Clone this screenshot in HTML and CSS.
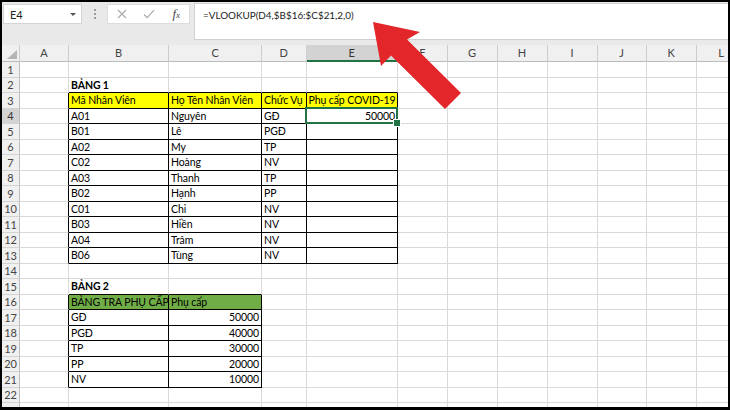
FILE: index.html
```html
<!DOCTYPE html>
<html lang="vi">
<head>
<meta charset="utf-8">
<title>VLOOKUP</title>
<link rel="stylesheet" href="styles.css">
</head>
<body>
<div class="frame">
  <div class="fbar">
    <div class="namebox"><span>E4</span><span class="caret"></span></div>
    <div class="grip"><i></i><i></i><i></i></div>
    <div class="btns">
      <span class="btn"><svg width="10" height="10" viewBox="0 0 10 10"><path d="M1 1L9 9M9 1L1 9" stroke="#a9a9a9" stroke-width="1.1" fill="none"/></svg></span>
      <span class="btn"><svg width="12" height="10" viewBox="0 0 12 10"><path d="M1 5.5L4.2 8.6L11 1.2" stroke="#a9a9a9" stroke-width="1.1" fill="none"/></svg></span>
      <span class="btn fx">f<small>x</small></span>
    </div>
    <div class="formula">=VLOOKUP(D4,$B$16:$C$21,2,0)</div>
  </div>
  <div class="sheet">
    <span class="ch corner"><i></i></span><span class="ch">A</span><span class="ch">B</span><span class="ch">C</span><span class="ch">D</span><span class="ch hl">E</span><span class="ch">F</span><span class="ch">G</span><span class="ch">H</span><span class="ch">I</span><span class="ch">J</span><span class="ch">K</span><span class="ch">L</span>

    <span class="rh">1</span><span></span><span></span><span></span><span></span><span></span><span></span><span></span><span></span><span></span><span></span><span></span><span></span>
    <span class="rh">2</span><span></span><span class="b tb">BẢNG 1</span><span class="tb"></span><span class="tb"></span><span class="tb"></span><span></span><span></span><span></span><span></span><span></span><span></span><span></span>
    <span class="rh">3</span><span class="tr"></span><span class="t y">Mã Nhân Viên</span><span class="t y">Họ Tên Nhân Viên</span><span class="t y">Chức Vụ</span><span class="t y">Phụ cấp COVID-19</span><span></span><span></span><span></span><span></span><span></span><span></span><span></span>
    <span class="rh hl">4</span><span class="tr"></span><span class="t">A01</span><span class="t">Nguyên</span><span class="t">GĐ</span><span class="t n sel">50000</span><span></span><span></span><span></span><span></span><span></span><span></span><span></span>
    <span class="rh">5</span><span class="tr"></span><span class="t">B01</span><span class="t">Lê</span><span class="t">PGĐ</span><span class="t"></span><span></span><span></span><span></span><span></span><span></span><span></span><span></span>
    <span class="rh">6</span><span class="tr"></span><span class="t">A02</span><span class="t">My</span><span class="t">TP</span><span class="t"></span><span></span><span></span><span></span><span></span><span></span><span></span><span></span>
    <span class="rh">7</span><span class="tr"></span><span class="t">C02</span><span class="t">Hoàng</span><span class="t">NV</span><span class="t"></span><span></span><span></span><span></span><span></span><span></span><span></span><span></span>
    <span class="rh">8</span><span class="tr"></span><span class="t">A03</span><span class="t">Thanh</span><span class="t">TP</span><span class="t"></span><span></span><span></span><span></span><span></span><span></span><span></span><span></span>
    <span class="rh">9</span><span class="tr"></span><span class="t">B02</span><span class="t">Hạnh</span><span class="t">PP</span><span class="t"></span><span></span><span></span><span></span><span></span><span></span><span></span><span></span>
    <span class="rh">10</span><span class="tr"></span><span class="t">C01</span><span class="t">Chi</span><span class="t">NV</span><span class="t"></span><span></span><span></span><span></span><span></span><span></span><span></span><span></span>
    <span class="rh">11</span><span class="tr"></span><span class="t">B03</span><span class="t">Hiền</span><span class="t">NV</span><span class="t"></span><span></span><span></span><span></span><span></span><span></span><span></span><span></span>
    <span class="rh">12</span><span class="tr"></span><span class="t">A04</span><span class="t">Trâm</span><span class="t">NV</span><span class="t"></span><span></span><span></span><span></span><span></span><span></span><span></span><span></span>
    <span class="rh">13</span><span class="tr"></span><span class="t">B06</span><span class="t">Tùng</span><span class="t">NV</span><span class="t"></span><span></span><span></span><span></span><span></span><span></span><span></span><span></span>
    <span class="rh">14</span><span></span><span></span><span></span><span></span><span></span><span></span><span></span><span></span><span></span><span></span><span></span><span></span>
    <span class="rh">15</span><span></span><span class="b tb">BẢNG 2</span><span class="tb"></span><span></span><span></span><span></span><span></span><span></span><span></span><span></span><span></span><span></span>
    <span class="rh">16</span><span class="tr"></span><span class="t g">BẢNG TRA PHỤ CẤP</span><span class="t g">Phụ cấp</span><span></span><span></span><span></span><span></span><span></span><span></span><span></span><span></span><span></span>
    <span class="rh">17</span><span class="tr"></span><span class="t">GĐ</span><span class="t n">50000</span><span></span><span></span><span></span><span></span><span></span><span></span><span></span><span></span><span></span>
    <span class="rh">18</span><span class="tr"></span><span class="t">PGĐ</span><span class="t n">40000</span><span></span><span></span><span></span><span></span><span></span><span></span><span></span><span></span><span></span>
    <span class="rh">19</span><span class="tr"></span><span class="t">TP</span><span class="t n">30000</span><span></span><span></span><span></span><span></span><span></span><span></span><span></span><span></span><span></span>
    <span class="rh">20</span><span class="tr"></span><span class="t">PP</span><span class="t n">20000</span><span></span><span></span><span></span><span></span><span></span><span></span><span></span><span></span><span></span>
    <span class="rh">21</span><span class="tr"></span><span class="t">NV</span><span class="t n">10000</span><span></span><span></span><span></span><span></span><span></span><span></span><span></span><span></span><span></span>
    <span class="rh">22</span><span></span><span></span><span></span><span></span><span></span><span></span><span></span><span></span><span></span><span></span><span></span><span></span>
    <span class="rh">23</span><span></span><span></span><span></span><span></span><span></span><span></span><span></span><span></span><span></span><span></span><span></span><span></span>
  </div>
  <svg class="arrow" width="730" height="410" viewBox="0 0 730 410" aria-hidden="true">
    <polygon points="373,22 420,32 407,39.5 461,93 445,109 391,55.5 381,66" fill="#e2262a"/>
  </svg>
</div>
</body>
</html>
```
FILE: styles.css
```css
* { box-sizing: border-box; }
html, body { margin: 0; padding: 0; background: #fff; }
body {
  font-family: "Lato", "Liberation Sans", sans-serif;
  font-size: 10.5px;
  letter-spacing: -0.1px;
  color: #000;
}
.frame {
  position: relative;
  width: 730px;
  height: 410px;
  border: 2px solid #000;
  border-bottom-width: 3px;
  overflow: hidden;
  display: flex;
  flex-direction: column;
  background: #fff;
}
.fbar {
  flex: 0 0 43px;
  display: flex;
  align-items: flex-start;
  background: #e9e9e9;
}
.namebox {
  margin: 2px 0 0 1px;
  width: 79px;
  height: 20px;
  background: #fff;
  border: 1px solid #d4d4d4;
  display: flex;
  align-items: center;
  justify-content: space-between;
  padding: 0 5px 0 6px;
  font-size: 11px;
  color: #222;
}
.caret {
  width: 0;
  height: 0;
  border-left: 3px solid transparent;
  border-right: 3px solid transparent;
  border-top: 3px solid #555;
}
.grip {
  width: 25px;
  height: 24px;
  display: flex;
  flex-direction: column;
  align-items: center;
  justify-content: center;
  gap: 2px;
}
.grip i { width: 2px; height: 2px; background: #9a9a9a; }
.btns {
  margin-top: 2px;
  width: 83px;
  height: 20px;
  background: #fff;
  border: 1px solid #dcdcdc;
  display: flex;
  align-items: center;
}
.btn { width: 28px; display: flex; justify-content: center; align-items: center; }
.fx {
  width: 26px;
  font-family: "Liberation Serif", serif;
  font-style: italic;
  font-size: 13px;
  color: #444;
  align-items: baseline;
}
.fx small { font-size: 9px; }
.formula {
  margin: 1px 0 0 4px;
  flex: 1;
  height: 37px;
  background: #fff;
  border: 1px solid #d0d0d0;
  border-right: 0;
  padding: 4px 0 0 8px;
  line-height: 14px;
  font-size: 9.9px;
  letter-spacing: 0;
  color: #222;
}
.sheet {
  flex: 1;
  display: grid;
  grid-template-columns: 18px 49px 100px 93px 44.5px 91.5px 49.5px 50px 50px 50px 49px 50px 50px;
  grid-template-rows: 17px;
  grid-auto-rows: 15.5px;
  overflow: hidden;
}
.sheet > span {
  display: flex;
  align-items: flex-end;
  padding: 0 2px 0 2px;
  border-right: 1px solid #d9d9d9;
  border-bottom: 1px solid #d9d9d9;
  white-space: nowrap;
  overflow: hidden;
  line-height: 13.5px;
}
.sheet > .ch {
  background: #f0f0f0;
  border-right: 1px solid #cdcdcd;
  border-bottom: 1px solid #bcbcbc;
  justify-content: center;
  align-items: center;
  font-size: 11px;
  color: #444;
}
.sheet > .ch.hl {
  background: #d3d3d3;
  border-bottom: 2px solid #217346;
  color: #333;
}
.sheet > .corner {
  justify-content: flex-end;
  align-items: flex-end;
  padding: 0 2px 2px 0;
}
.corner i {
  width: 10px;
  height: 9px;
  background: #b4b4b4;
  clip-path: polygon(100% 0, 100% 100%, 0 100%);
}
.sheet > .rh {
  background: #f0f0f0;
  border-right: 1px solid #bcbcbc;
  border-bottom: 1px solid #d3d3d3;
  justify-content: center;
  align-items: center;
  font-size: 11px;
  color: #444;
}
.sheet > .rh.hl { background: #d3d3d3; color: #333; }
.sheet > .tr { border-right-color: #000; }
.sheet > .tb { border-bottom-color: #000; }
.sheet > .t { border-right-color: #000; border-bottom-color: #000; }
.sheet > .y { background: #ffff00; }
.sheet > .g { background: #70ad47; }
.sheet > .n { justify-content: flex-end; }
.sheet > .b { font-weight: 700; }
.sheet > .sel { position: relative; overflow: visible; }
.sel::before {
  content: "";
  position: absolute;
  top: -2px;
  left: -2px;
  right: -1px;
  bottom: -1px;
  border: 2px solid #217346;
}
.sel::after {
  content: "";
  position: absolute;
  right: -4px;
  bottom: -4px;
  width: 6px;
  height: 6px;
  background: #217346;
  border: 1px solid #fff;
}
.arrow {
  position: absolute;
  top: -2px;
  left: -2px;
  pointer-events: none;
}
```
